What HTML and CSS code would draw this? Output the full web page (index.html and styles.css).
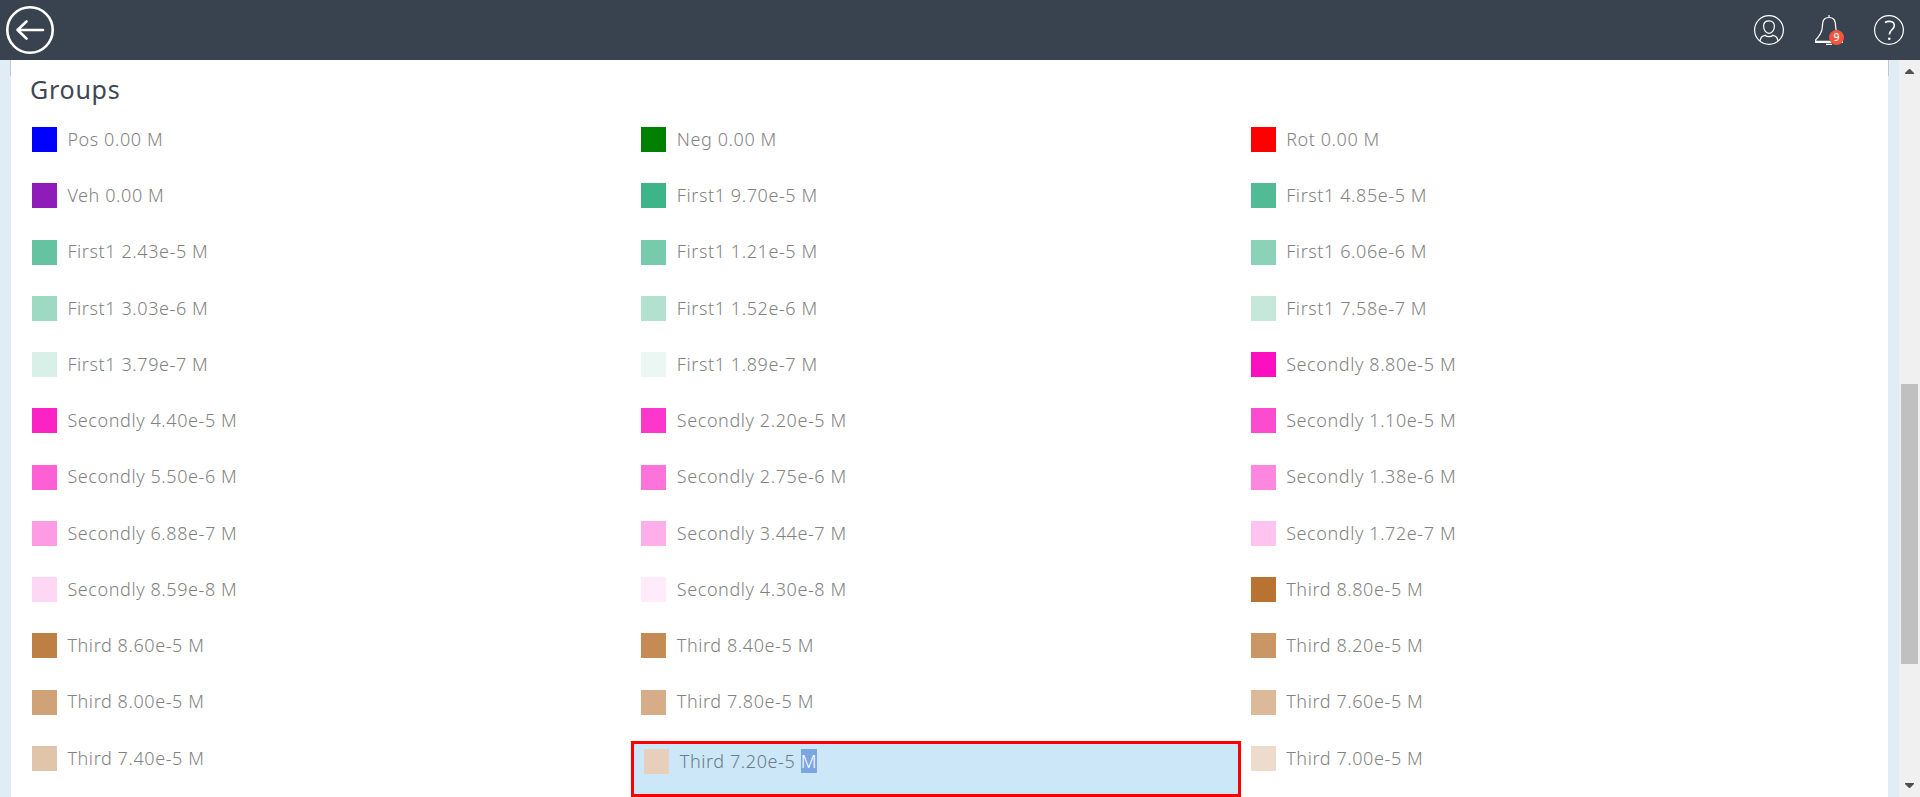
FILE: index.html
```html
<!DOCTYPE html>
<html lang="en">
<head>
<meta charset="utf-8">
<title>Groups</title>
<link rel="stylesheet" href="styles.css">
</head>
<body>
<header class="topbar">
  <svg class="back" viewBox="0 0 48 48" width="48" height="48"><circle cx="24" cy="24" r="22.7"/><path d="M37 24H11.5M20.5 15.5L11.5 24L20.5 32.5"/></svg>
  <nav class="tools">
    <svg width="30" height="30" viewBox="0 0 30 30"><circle cx="15" cy="15" r="14.4"/><path d="M15 5.800c-3.500 0-5.400 2.300-5.400 5.300 0 3.900 2.400 7.200 5.400 7.200s5.400-3.300 5.400-7.200c0-3-1.900-5.300-5.400-5.300zM6 26c.5-3 1.500-4.700 3.500-5.200l1.800-.5c1.500 1.800 5.900 1.800 7.400 0l1.800.5c2 .5 3 2.200 3.500 5.200"/></svg>
    <div class="bell">
      <svg width="30" height="30" viewBox="0 0 30 30"><path d="M15 0v2.500M1.700 27.500V24.800C5 21.500 8 17.500 8.300 12.500C8.500 6 9.500 2.500 15 2.500S21.500 6 21.700 12.500C22 17.500 25 21.500 28.300 24.800V27.500zM1.700 26.400H28M12 29.400h6"/></svg>
      <span class="badge">9</span>
    </div>
    <svg width="30" height="30" viewBox="0 0 30 30"><circle cx="15" cy="15" r="14.4"/><path class="mark" d="M11 7.500c2.800-1.600 9.300-1.900 9.300 3 0 4.300-4.900 4.300-4.900 8.900"/><circle class="dot" cx="15.300" cy="23.700" r="1.300"/></svg>
  </nav>
</header>
<div class="body">
  <main class="panel">
    <h1>Groups</h1>
    <ul class="grid">
      <li><i class="pos"></i><span>Pos 0.00 M</span></li>
      <li><i class="neg"></i><span>Neg 0.00 M</span></li>
      <li><i class="rot"></i><span>Rot 0.00 M</span></li>
      <li><i class="veh"></i><span>Veh 0.00 M</span></li>
      <li><i class="first" style="--a:1"></i><span>First1 9.70e-5 M</span></li>
      <li><i class="first" style="--a:.9"></i><span>First1 4.85e-5 M</span></li>
      <li><i class="first" style="--a:.8"></i><span>First1 2.43e-5 M</span></li>
      <li><i class="first" style="--a:.7"></i><span>First1 1.21e-5 M</span></li>
      <li><i class="first" style="--a:.6"></i><span>First1 6.06e-6 M</span></li>
      <li><i class="first" style="--a:.5"></i><span>First1 3.03e-6 M</span></li>
      <li><i class="first" style="--a:.4"></i><span>First1 1.52e-6 M</span></li>
      <li><i class="first" style="--a:.3"></i><span>First1 7.58e-7 M</span></li>
      <li><i class="first" style="--a:.2"></i><span>First1 3.79e-7 M</span></li>
      <li><i class="first" style="--a:.1"></i><span>First1 1.89e-7 M</span></li>
      <li><i class="second" style="--a:1"></i><span>Secondly 8.80e-5 M</span></li>
      <li><i class="second" style="--a:.917"></i><span>Secondly 4.40e-5 M</span></li>
      <li><i class="second" style="--a:.833"></i><span>Secondly 2.20e-5 M</span></li>
      <li><i class="second" style="--a:.75"></i><span>Secondly 1.10e-5 M</span></li>
      <li><i class="second" style="--a:.667"></i><span>Secondly 5.50e-6 M</span></li>
      <li><i class="second" style="--a:.583"></i><span>Secondly 2.75e-6 M</span></li>
      <li><i class="second" style="--a:.5"></i><span>Secondly 1.38e-6 M</span></li>
      <li><i class="second" style="--a:.417"></i><span>Secondly 6.88e-7 M</span></li>
      <li><i class="second" style="--a:.333"></i><span>Secondly 3.44e-7 M</span></li>
      <li><i class="second" style="--a:.25"></i><span>Secondly 1.72e-7 M</span></li>
      <li><i class="second" style="--a:.167"></i><span>Secondly 8.59e-8 M</span></li>
      <li><i class="second" style="--a:.083"></i><span>Secondly 4.30e-8 M</span></li>
      <li><i class="third" style="--a:1"></i><span>Third 8.80e-5 M</span></li>
      <li><i class="third" style="--a:.917"></i><span>Third 8.60e-5 M</span></li>
      <li><i class="third" style="--a:.833"></i><span>Third 8.40e-5 M</span></li>
      <li><i class="third" style="--a:.75"></i><span>Third 8.20e-5 M</span></li>
      <li><i class="third" style="--a:.667"></i><span>Third 8.00e-5 M</span></li>
      <li><i class="third" style="--a:.583"></i><span>Third 7.80e-5 M</span></li>
      <li><i class="third" style="--a:.5"></i><span>Third 7.60e-5 M</span></li>
      <li><i class="third" style="--a:.417"></i><span>Third 7.40e-5 M</span></li>
      <li class="active"><i class="picked"></i><span>Third 7.20e-5 <mark>M</mark></span></li>
      <li><i class="third" style="--a:.25"></i><span>Third 7.00e-5 M</span></li>
    </ul>
  </main>
  <div class="scroll">
    <svg width="9" height="5" viewBox="0 0 9 5"><path d="M0 5V4L4 0H5L9 4V5z"/></svg>
    <div class="thumb"></div>
    <svg class="down" width="9" height="5" viewBox="0 0 9 5"><path d="M0 0V1L4 5H5L9 1V0z"/></svg>
  </div>
</div>
</body>
</html>
```
FILE: styles.css
```css
* { box-sizing: border-box; }
body { margin: 0; height: 797px; overflow: hidden; background: #e0edf5; font-family: "Noto Sans", "Open Sans", sans-serif; }
.topbar { height: 60px; background: #38434f; display: flex; justify-content: space-between; align-items: center; padding: 0 16px 0 6px; }
.topbar svg { display: block; fill: none; stroke: #fff; stroke-width: 1.2; }
.topbar .back { stroke-width: 2.6; stroke-linecap: round; stroke-linejoin: round; }
.tools { display: flex; gap: 30px; }
.bell { position: relative; }
.badge { position: absolute; left: 15px; top: 15px; width: 15px; height: 15px; border-radius: 50%; background: #f4543c; color: #fff; font-size: 10.5px; font-weight: 500; line-height: 15px; text-align: center; }
.topbar .mark { stroke-width: 1.6; }
.topbar .dot { fill: #fff; stroke: none; }
.body { display: flex; height: 737px; padding-left: 10px; }
.panel { width: 1879px; background: linear-gradient(#c4c8cb, #c4c8cb) 0 0 / 1px 16px no-repeat, linear-gradient(#c4c8cb, #c4c8cb) 100% 0 / 1px 16px no-repeat, linear-gradient(#fff, #fff) 1px 0 / 1877px 100% no-repeat; padding: 12px 39px 0 12px; }
h1 { margin: 0 0 0 8px; height: 50px; font-size: 25px; line-height: 35px; font-weight: 400; color: #3c4753; letter-spacing: .75px; }
.grid { margin: 0; padding: 0; list-style: none; display: grid; grid-template-columns: repeat(3, 609.4px); grid-auto-rows: 56.26px; }
.grid li { display: flex; align-items: flex-start; gap: 10.4px; padding: 5px 10px 0; }
.grid i { width: 25px; height: 25px; }
.grid span { margin-top: -.15px; font-size: 18px; line-height: 25px; font-weight: 300; letter-spacing: .59px; color: #828282; white-space: pre; }
.pos { background: #00f; }
.neg { background: #008000; }
.rot { background: #f00; }
.veh { background: #8f1cb8; }
.first { background: rgb(62 180 137 / var(--a)); }
.second { background: rgb(252 15 192 / var(--a)); }
.third { background: rgb(184 115 51 / var(--a)); }
.picked { background: #e7cfbc; }
.grid .active { border: 3px solid #f00; background: #cce7f8; height: 56px; }
.grid .active span { color: #6a7c87; }
mark { background: #7ca6e1; color: #fff; }
.scroll { width: 21px; margin-left: 10px; background: #f0f0f0; display: flex; flex-direction: column; padding: 9px 1px 9px 2px; }
.scroll svg { margin-left: 4px; fill: #505050; flex: none; }
.thumb { margin-top: 310px; width: 17px; height: 280px; background: #c0c0c0; }
.scroll .down { margin-top: auto; }
```
